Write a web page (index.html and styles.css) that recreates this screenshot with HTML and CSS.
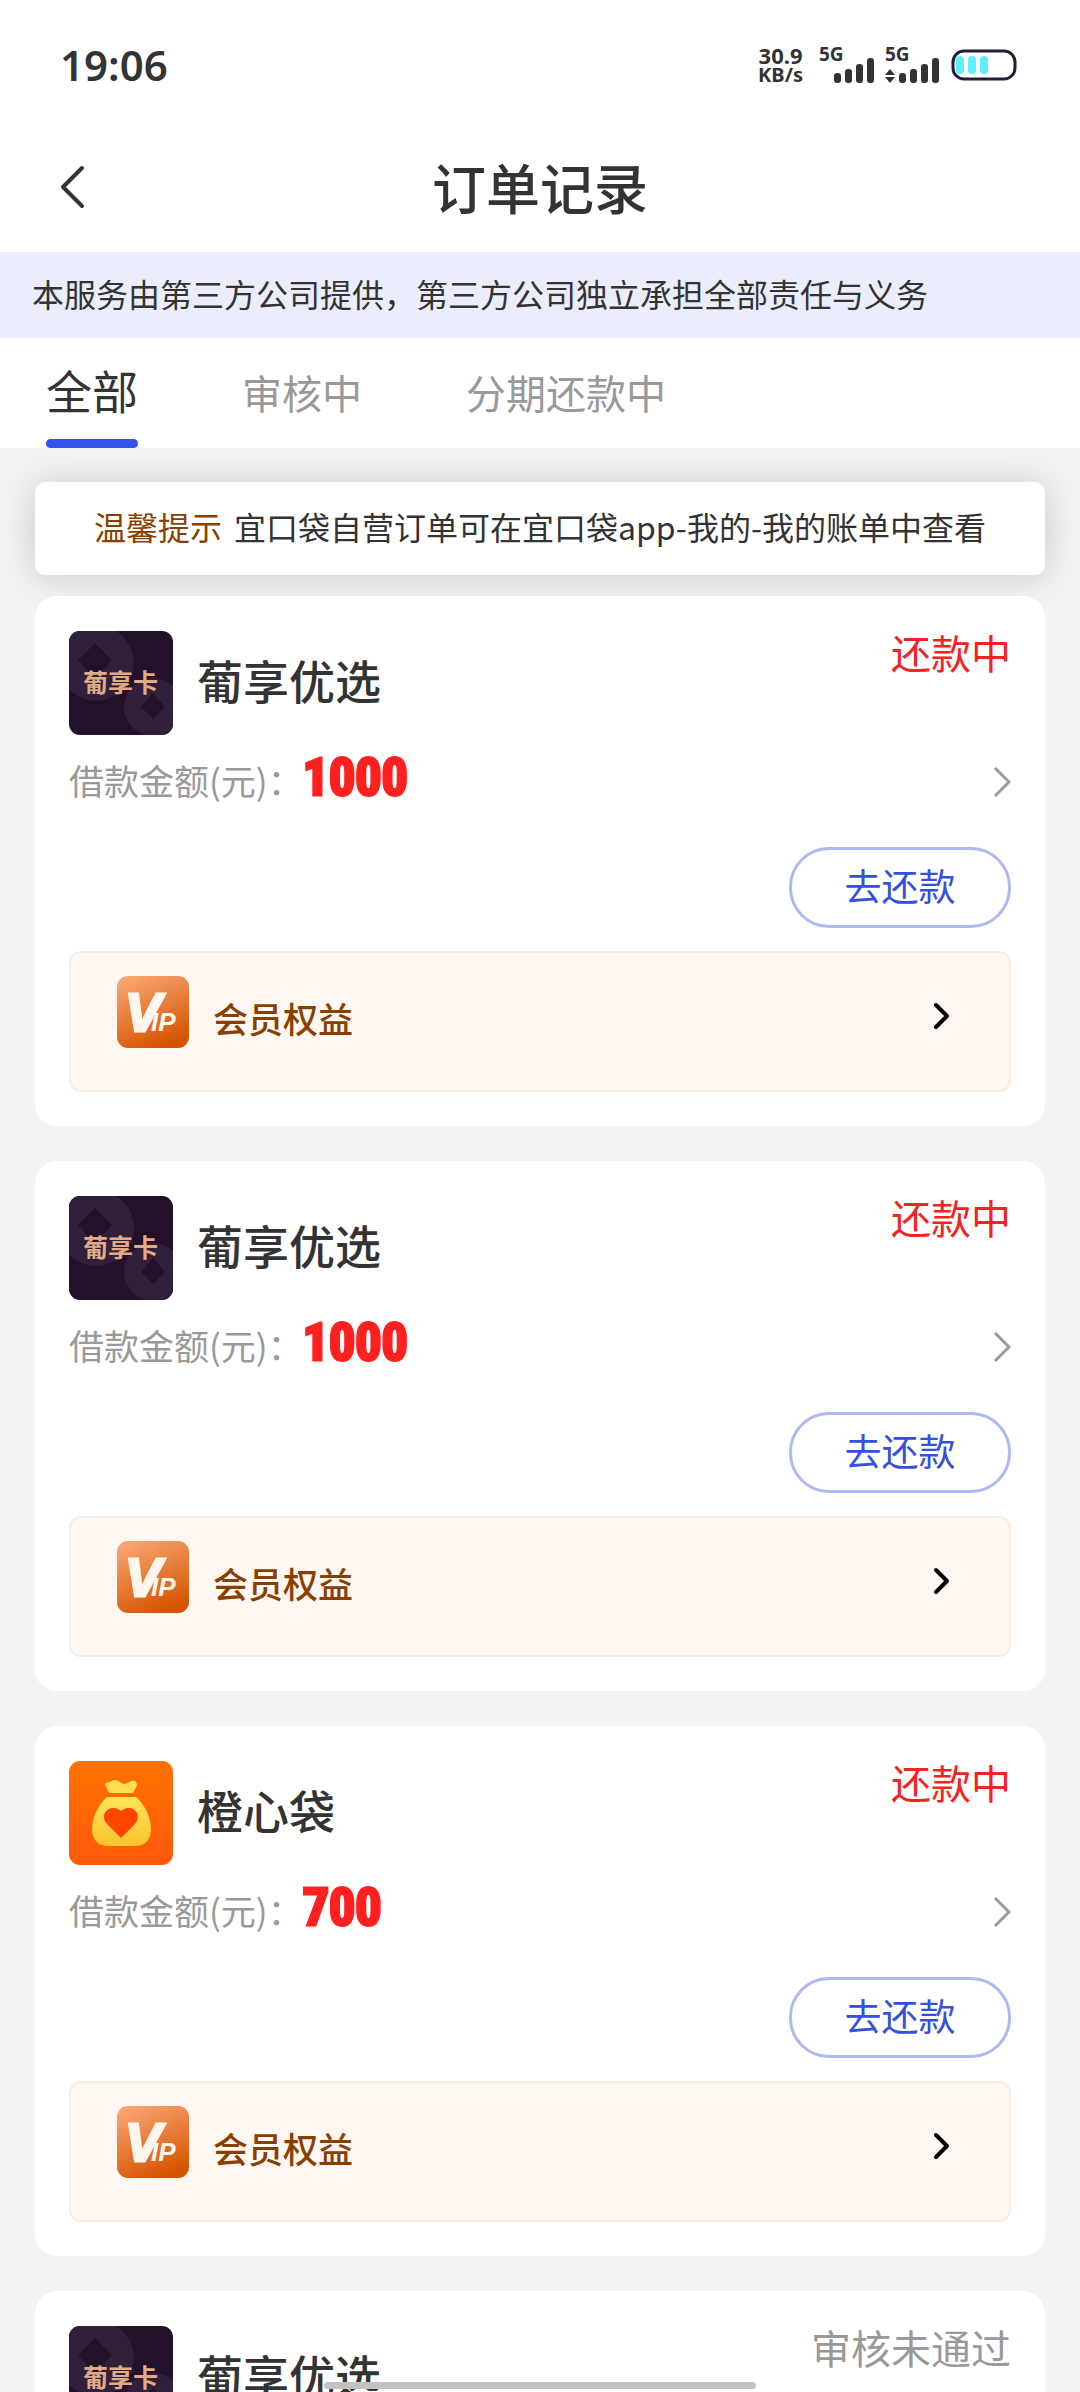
FILE: index.html
```html
<!DOCTYPE html>
<html lang="zh-CN">
<head>
<meta charset="utf-8">
<meta name="viewport" content="width=device-width, initial-scale=1">
<title>订单记录</title>
<link rel="stylesheet" href="styles.css">
</head>
<body>
<svg class="sprite" aria-hidden="true">
  <defs>
    <linearGradient id="vip-bg" x1="0.2" y1="0" x2="0.6" y2="1">
      <stop offset="0" stop-color="#f9a571"/>
      <stop offset="1" stop-color="#d55400"/>
    </linearGradient>
    <linearGradient id="orange-bg" x1="0" y1="0" x2="0" y2="1">
      <stop offset="0" stop-color="#ff7200"/>
      <stop offset="1" stop-color="#ff5a0c"/>
    </linearGradient>
    <linearGradient id="bag-fill" x1="0" y1="0" x2="0" y2="1">
      <stop offset="0" stop-color="#ffe45a"/>
      <stop offset="1" stop-color="#fbc52c"/>
    </linearGradient>
  </defs>
  <symbol id="logo-card" viewBox="0 0 104 104">
    <rect width="104" height="104" fill="#231029"/>
    <circle cx="27" cy="32" r="38" fill="#30203a"/>
    <circle cx="84" cy="76" r="29" fill="#30203a"/>
    <path d="M26 12 43 29 26 48 9 29Z" fill="#231029"/>
    <path d="M84 62 96 76 84 88 72 76Z" fill="#231029"/>
  </symbol>
  <symbol id="logo-bag" viewBox="0 0 104 104">
    <rect width="104" height="104" fill="url(#orange-bg)"/>
    <path d="M40 32 38 27Q36 25 36 23Q37 21 41 21Q46 17 51 21Q55 25 60 21Q66 17 68 23Q68 26 66 28L64 32Z" fill="#ffdf4f"/>
    <path d="M38 36H67Q82 50 82 70Q80 85 66 85H39Q25 85 23 70Q23 50 38 36Z" fill="url(#bag-fill)"/>
    <path d="M52 77 39 64C30 55 38 46 45 47C49 47 51 50 52 50C53 50 55 47 59 47C66 46 74 55 65 64Z" fill="#ff4500"/>
  </symbol>
  <symbol id="arrow-thin" viewBox="0 0 18 32">
    <path d="M2 2 16 16 2 30" fill="none" stroke="#9a9a9a" stroke-width="3"/>
  </symbol>
  <symbol id="arrow-bold" viewBox="0 0 18 30">
    <path d="M3 4 14 15 3 26" fill="none" stroke="#000" stroke-width="4" stroke-linecap="round" stroke-linejoin="round"/>
  </symbol>
</svg>

<div class="screen">
  <div class="status-bar">
    <span class="clock">19:06</span>
    <div class="indicators">
      <div class="speed"><span class="speed-value">30.9</span><span class="speed-unit">KB/s</span></div>
      <div class="signal">
        <span class="network">5G</span>
        <svg width="56" height="26" viewBox="0 0 56 26" fill="#333"><rect x="15" y="15" width="7" height="10" rx="3"/><rect x="26" y="11" width="7" height="14" rx="3"/><rect x="37" y="6" width="7" height="19" rx="3"/><rect x="48" y="0" width="7" height="25" rx="3"/></svg>
      </div>
      <div class="signal">
        <span class="network">5G</span>
        <svg width="56" height="26" viewBox="0 0 56 26" fill="#333"><path d="M5 11 10 17H0ZM0 19H10L5 25Z"/><rect x="14" y="15" width="7" height="10" rx="3"/><rect x="25" y="11" width="7" height="14" rx="3"/><rect x="36" y="6" width="7" height="19" rx="3"/><rect x="47" y="0" width="7" height="25" rx="3"/></svg>
      </div>
      <svg class="battery" width="66" height="32" viewBox="0 0 66 32"><rect x="2" y="2" width="62" height="28" rx="11" fill="none" stroke="#241d3c" stroke-width="3"/><g fill="#5cf0ff"><rect x="5" y="7" width="8" height="18" rx="4"/><rect x="17" y="7" width="8" height="18" rx="4"/><rect x="29" y="7" width="8" height="18" rx="4"/></g></svg>
    </div>
  </div>

  <header class="nav-bar">
    <button class="back" type="button" aria-label="返回"><svg width="25" height="44" viewBox="0 0 25 44"><path d="M22 3 3 22 22 41" fill="none" stroke="#333" stroke-width="4" stroke-linecap="round" stroke-linejoin="round"/></svg></button>
    <h1 class="title">订单记录</h1>
  </header>

  <p class="banner">本服务由第三方公司提供，第三方公司独立承担全部责任与义务</p>

  <nav class="tabs">
    <a class="tab tab-active" href="#all" aria-current="page">全部</a>
    <a class="tab" href="#review">审核中</a>
    <a class="tab" href="#repay">分期还款中</a>
  </nav>

  <main class="list">
    <p class="notice"><span class="notice-tag">温馨提示</span><span>宜口袋自营订单可在宜口袋app-我的-我的账单中查看</span></p>

    <article class="card">
      <div class="card-head">
        <svg class="logo" viewBox="0 0 104 104"><use href="#logo-card"/><text class="logo-text" x="14" y="61">葡享卡</text></svg>
        <h2 class="name">葡享优选</h2>
        <span class="state state-due">还款中</span>
      </div>
      <a class="amount-row" href="#order-1"><span>借款金额(元)：</span><strong class="amount">1000</strong><svg class="more" width="18" height="32"><use href="#arrow-thin"/></svg></a>
      <button class="pay" type="button">去还款</button>
      <a class="benefit" href="#vip-1"><svg class="vip" viewBox="0 0 72 72"><rect width="72" height="72" rx="11" fill="url(#vip-bg)"/><text class="vip-big" x="8" y="55">V</text><text class="vip-small" x="34" y="55">IP</text></svg><span class="benefit-name">会员权益</span><svg class="benefit-arrow" width="18" height="80"><use href="#arrow-bold"/></svg></a>
    </article>

    <article class="card">
      <div class="card-head">
        <svg class="logo" viewBox="0 0 104 104"><use href="#logo-card"/><text class="logo-text" x="14" y="61">葡享卡</text></svg>
        <h2 class="name">葡享优选</h2>
        <span class="state state-due">还款中</span>
      </div>
      <a class="amount-row" href="#order-2"><span>借款金额(元)：</span><strong class="amount">1000</strong><svg class="more" width="18" height="32"><use href="#arrow-thin"/></svg></a>
      <button class="pay" type="button">去还款</button>
      <a class="benefit" href="#vip-2"><svg class="vip" viewBox="0 0 72 72"><rect width="72" height="72" rx="11" fill="url(#vip-bg)"/><text class="vip-big" x="8" y="55">V</text><text class="vip-small" x="34" y="55">IP</text></svg><span class="benefit-name">会员权益</span><svg class="benefit-arrow" width="18" height="80"><use href="#arrow-bold"/></svg></a>
    </article>

    <article class="card">
      <div class="card-head">
        <svg class="logo" role="img" aria-label="橙心袋" viewBox="0 0 104 104"><use href="#logo-bag"/></svg>
        <h2 class="name">橙心袋</h2>
        <span class="state state-due">还款中</span>
      </div>
      <a class="amount-row" href="#order-3"><span>借款金额(元)：</span><strong class="amount">700</strong><svg class="more" width="18" height="32"><use href="#arrow-thin"/></svg></a>
      <button class="pay" type="button">去还款</button>
      <a class="benefit" href="#vip-3"><svg class="vip" viewBox="0 0 72 72"><rect width="72" height="72" rx="11" fill="url(#vip-bg)"/><text class="vip-big" x="8" y="55">V</text><text class="vip-small" x="34" y="55">IP</text></svg><span class="benefit-name">会员权益</span><svg class="benefit-arrow" width="18" height="80"><use href="#arrow-bold"/></svg></a>
    </article>

    <article class="card">
      <div class="card-head">
        <svg class="logo" viewBox="0 0 104 104"><use href="#logo-card"/><text class="logo-text" x="14" y="61">葡享卡</text></svg>
        <h2 class="name">葡享优选</h2>
        <span class="state">审核未通过</span>
      </div>
    </article>
  </main>
  <div class="home-indicator"></div>
</div>
</body>
</html>
```
FILE: styles.css
```css
* { box-sizing: border-box; }

body {
  margin: 0;
  font-family: "Noto Sans CJK SC", sans-serif;
  color: #333;
  background: #f3f3f3;
}

h1, h2, p { margin: 0; font-weight: 500; }
a { color: inherit; text-decoration: none; }
button { font: inherit; padding: 0; border: 0; background: none; cursor: pointer; }
svg { display: block; flex: none; }

.sprite { position: absolute; width: 0; height: 0; }

.screen {
  display: flex;
  flex-direction: column;
  height: 100vh;
  overflow: hidden;
}

/* Status bar */
.status-bar {
  display: flex;
  justify-content: space-between;
  align-items: center;
  height: 130px;
  padding: 0 63px 0 60px;
  background: #fff;
  font-family: "Noto Sans", sans-serif;
  font-weight: 700;
}
.clock { font-size: 42px; font-weight: 600; line-height: 60px; }
.indicators { display: flex; align-items: center; gap: 12px; }
.speed {
  display: flex;
  flex-direction: column;
  align-items: center;
  margin-right: 4px;
  font-size: 22px;
  line-height: 20px;
}
.speed-unit { font-size: 20px; }
.signal { display: flex; flex-direction: column; width: 54px; height: 38px; }
.network { height: 12px; font-size: 19px; line-height: 16px; }

/* Title */
.nav-bar {
  display: grid;
  grid-template-columns: 1fr auto 1fr;
  align-items: center;
  height: 122px;
  padding: 0 60px 8px;
  background: #fff;
}
.back { justify-self: start; height: 80px; }
.title { font-size: 54px; line-height: 80px; }

.banner {
  padding: 19px 32px 23px;
  background: #ebedfc;
  font-size: 32px;
  font-weight: 400;
  line-height: 44px;
}

/* Tabs */
.tabs {
  display: flex;
  gap: 104px;
  height: 110px;
  padding: 0 46px;
  background: #fff;
}
.tab { color: #999; font-size: 40px; line-height: 108px; }
.tab-active { position: relative; color: #333; font-size: 46px; line-height: 102px; }
.tab-active::after {
  content: "";
  position: absolute;
  right: 0;
  bottom: 0;
  left: 0;
  height: 9px;
  border-radius: 5px;
  background: #3153ee;
}

/* Order list */
.list {
  display: flex;
  flex: 1;
  flex-direction: column;
  gap: 35px;
  min-height: 0;
  padding: 34px 35px;
  overflow-y: auto;
  scrollbar-width: none;
}
.list > * { flex: none; }
.notice {
  display: flex;
  justify-content: center;
  gap: 12px;
  margin-bottom: -14px;
  padding: 20px 24px 25px;
  border-radius: 10px;
  background: #fff;
  box-shadow: 0 2px 35px rgba(0, 0, 0, 0.17);
  font-size: 32px;
  font-weight: 400;
  line-height: 48px;
  white-space: nowrap;
}
.notice-tag { color: #884000; }

.card {
  position: relative;
  display: flex;
  flex-direction: column;
  padding: 35px 34px 34px;
  border-radius: 22px;
  background: #fff;
}
.card-head { display: flex; align-items: center; gap: 24px; }
.logo { width: 104px; height: 104px; border-radius: 11px; }
.logo-text { font-size: 25px; font-weight: 700; fill: #e2ab87; }
.name { flex: 1; padding-bottom: 8px; font-size: 46px; line-height: 64px; }
.state { align-self: flex-start; color: #999; font-size: 40px; line-height: 42px; }
.state-due { color: #f52222; }

.amount-row {
  display: flex;
  align-items: baseline;
  height: 70px;
  margin-top: 12px;
  color: #999;
  font-size: 35px;
  line-height: 66px;
}
.amount {
  color: #ff2020;
  font-family: "Liberation Sans Narrow", "Roboto Condensed", "Liberation Sans", sans-serif;
  font-size: 52px;
  font-weight: 700;
  line-height: 52px;
  -webkit-text-stroke: 3px #ff2020;
}
.more { align-self: center; margin-left: auto; }

.pay {
  align-self: flex-end;
  width: 222px;
  height: 81px;
  margin-top: 30px;
  padding-bottom: 6px;
  border: 3px solid #adb9f0;
  border-radius: 40px;
  color: #3450dc;
  font-size: 37px;
}

.benefit {
  display: flex;
  gap: 24px;
  min-height: 141px;
  margin-top: 23px;
  padding: 23px 58px 23px 46px;
  border: 2px solid #fbebe2;
  border-radius: 12px;
  background: #fff7f2;
}
.vip { width: 72px; height: 72px; }
.vip-big, .vip-small {
  fill: #fff7ee;
  stroke: #fff7ee;
  font-family: "Liberation Sans", sans-serif;
  font-style: italic;
  font-weight: 700;
}
.vip-big { font-size: 54px; stroke-width: 3px; }
.vip-small { font-size: 26px; stroke-width: 0; }
.benefit-name { flex: 1; color: #884000; font-size: 35px; font-weight: 500; line-height: 84px; }

.home-indicator {
  position: fixed;
  bottom: 3px;
  left: 30%;
  width: 40%;
  height: 7px;
  border-radius: 4px;
  background: #c2c2c2;
}
```
